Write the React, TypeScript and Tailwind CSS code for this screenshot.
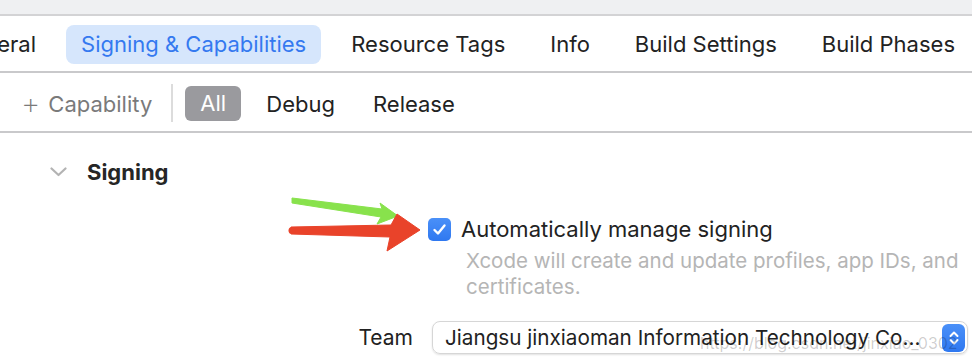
import React from 'react'

const tabs = ['General', 'Signing & Capabilities', 'Resource Tags', 'Info', 'Build Settings', 'Build Phases']

function Arrows() {
  return (
    <svg className="absolute left-0 top-0 pointer-events-none" width="972" height="360">
      {/* green arrow */}
      <polygon
        points="292,198 382,209 380,203 398,216 377,224 381,217 292,203"
        fill="#88e24c"
        stroke="#88e24c"
        strokeWidth="1"
        strokeLinejoin="round"
      />
      {/* red arrow */}
      <polygon
        points="291,227 391,225 397,214 420,230 387,251 390,237 291,234"
        fill="#e9432a"
        stroke="#e9432a"
        strokeWidth="1"
        strokeLinejoin="round"
      />
      <circle cx="292" cy="230.5" r="3.5" fill="#e9432a" />
    </svg>
  )
}

export default function App() {
  return (
    <div
      className="relative w-[972px] h-[360px] overflow-hidden bg-white text-[#222]"
      style={{ fontFamily: 'Inter, "Noto Sans", sans-serif' }}
    >
      {/* top strip */}
      <div className="h-[16px] bg-[#eff0f2] border-b-2 border-[#d3d3d5]" />

      {/* tab row */}
      <div className="h-[57px] border-b-2 border-[#c9c9cb] flex items-center">
        <div className="flex items-center gap-[15px] ml-[-60px] mt-[2px]">
          {tabs.map((t) => (
            <div
              key={t}
              className={`h-[39px] px-[15px] flex items-center rounded-[8px] text-[22px] whitespace-nowrap ${
                t === 'Signing & Capabilities' ? 'bg-[#d6e6fc] text-[#3479f0]' : 'text-[#222]'
              }`}
            >
              {t}
            </div>
          ))}
        </div>
      </div>

      {/* filter row */}
      <div className="h-[60px] border-b-2 border-[#c9c9cb] flex items-center pt-[4px]">
        <div className="flex items-center pl-[21px] text-[#7a7a7a] text-[22px]">
          <span className="text-[30px] font-extralight leading-none mr-[8px] mt-[-3px]">+</span>
          <span>Capability</span>
        </div>
        <div className="w-[2px] h-[38px] bg-[#dcdcdc] ml-[19px] mr-[12px] mt-[-2px]" />
        <div className="h-[35px] w-[56px] rounded-[6px] bg-[#9a9a9e] text-white text-[22px] flex items-center justify-center mt-[-2px]">
          All
        </div>
        <div className="ml-[25px] text-[22px]">Debug</div>
        <div className="ml-[38px] text-[22px]">Release</div>
      </div>

      {/* content */}
      <div className="pt-[26px]">
        <div className="flex items-center pl-[50px] h-[26px]">
          <svg width="17" height="10" viewBox="0 0 17 10" className="mr-[20px]">
            <polyline points="1.5,1.5 8.5,8 15.5,1.5" fill="none" stroke="#b3b3b3" strokeWidth="2.2" strokeLinecap="round" strokeLinejoin="round" />
          </svg>
          <span className="text-[22px] font-bold text-[#262626]">Signing</span>
        </div>

        <div className="flex items-center pl-[428px] mt-[31px] h-[26px]">
          <div className="w-[23px] h-[23px] rounded-[5px] bg-gradient-to-b from-[#4a90f8] to-[#2f78f0] flex items-center justify-center">
            <svg width="15" height="13" viewBox="0 0 15 13">
              <polyline points="2.5,7 6,10.5 12.5,2.5" fill="none" stroke="white" strokeWidth="2.4" strokeLinecap="round" strokeLinejoin="round" />
            </svg>
          </div>
          <span className="ml-[10px] text-[22px] text-[#222]">Automatically manage signing</span>
        </div>

        <div className="pl-[466px] pr-[10px] mt-[6px] text-[20.5px] leading-[26px] text-[#b5b5b5]">
          Xcode will create and update profiles, app IDs, and certificates.
        </div>

        <div className="flex items-center mt-[21px]">
          <div className="w-[413px] text-right text-[21px] text-[#222]">Team</div>
          <div className="ml-[19px] w-[536px] h-[33px] rounded-[8px] border border-[#d6d6d6] shadow-[0_1px_2px_rgba(0,0,0,0.12)] flex items-center pl-[12px] pr-[2px]">
            <span className="flex-1 text-[20.7px] text-[#222] whitespace-nowrap overflow-hidden">
              Jiangsu jinxiaoman Information Technology Co...
            </span>
            <div className="w-[23px] h-[28px] rounded-[6px] bg-gradient-to-b from-[#4a90f8] to-[#2f78f0] flex items-center justify-center">
              <svg width="12" height="18" viewBox="0 0 12 18">
                <polyline points="2.5,7 6,3.5 9.5,7" fill="none" stroke="white" strokeWidth="2" strokeLinecap="round" strokeLinejoin="round" />
                <polyline points="2.5,11 6,14.5 9.5,11" fill="none" stroke="white" strokeWidth="2" strokeLinecap="round" strokeLinejoin="round" />
              </svg>
            </div>
          </div>
        </div>
      </div>

      {/* watermark */}
      <div className="absolute left-[700px] top-[331px] text-[16px] text-[#000]/20 whitespace-nowrap pointer-events-none">
        https://blog.csdn.net/jinxiao_0302
      </div>

      <Arrows />
    </div>
  )
}
